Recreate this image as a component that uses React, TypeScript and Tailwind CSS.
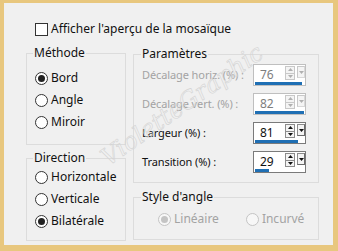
import React from "react";

const font = "font-['Noto_Sans','Open_Sans',sans-serif]";

function Radio({ checked, disabled }: { checked?: boolean; disabled?: boolean }) {
  return (
    <span
      className={`flex items-center justify-center w-[13px] h-[13px] rounded-full border shrink-0 ${
        disabled ? "border-[#c4c4c4] bg-[#f7f7f7]" : "border-[#333333] bg-white"
      }`}
    >
      {checked && (
        <span className={`w-[7px] h-[7px] rounded-full ${disabled ? "bg-[#c4c4c4]" : "bg-[#222222]"}`} />
      )}
    </span>
  );
}

function RadioRow({ label, checked, disabled }: { label: string; checked?: boolean; disabled?: boolean }) {
  return (
    <div className="flex items-center h-[22px] gap-[3px]">
      <Radio checked={checked} disabled={disabled} />
      <span className={disabled ? "text-[#a3a3a3]" : "text-[#111111]"}>{label}</span>
    </div>
  );
}

function Spin({ value, bar, disabled }: { value: string; bar: number; disabled?: boolean }) {
  const line = disabled ? "border-[#c8c8c8]" : "border-[#8c8c8c]";
  const arrow = disabled ? "#b0b0b0" : "#111111";
  return (
    <div
      className={`flex flex-col w-[53px] h-[22px] border bg-white shrink-0 ${
        disabled ? "border-[#bfbfbf]" : "border-[#7a7a7a]"
      }`}
    >
      <div className="flex items-start h-[17px] pt-[1px]">
        <span className={`w-[31px] pl-[6px] leading-[18px] ${disabled ? "text-[#7e7e7e]" : "text-[#111111]"}`}>
          {value}
        </span>
        <div className={`flex flex-col w-[10px] h-[14px] border ${line} bg-[#f4f4f4]`}>
          <div className={`flex-1 flex items-center justify-center border-b ${line}`}>
            <svg width="5" height="3" viewBox="0 0 5 3">
              <path d="M0 3 L2.5 0 L5 3 Z" fill={arrow} />
            </svg>
          </div>
          <div className="flex-1 flex items-center justify-center">
            <svg width="5" height="3" viewBox="0 0 5 3">
              <path d="M0 0 L2.5 3 L5 0 Z" fill={arrow} />
            </svg>
          </div>
        </div>
        <div
          className={`ml-[2px] flex items-center justify-center w-[8px] h-[12px] border-l border-t ${line} ${
            disabled ? "border-r-[#d8d8d8] border-b-[#d8d8d8]" : "border-r-[#6a6a6a] border-b-[#6a6a6a]"
          } border-r border-b bg-[#f4f4f4]`}
        >
          <svg width="5" height="3" viewBox="0 0 5 3">
            <path d="M0 0 L2.5 3 L5 0 Z" fill={arrow} />
          </svg>
        </div>
      </div>
      <div className="h-[3px] pl-[1px]">
        <div className="h-[3px] bg-[#1f6fb4]" style={{ width: bar }} />
      </div>
    </div>
  );
}

function ParamRow({ label, value, bar, disabled }: { label: string; value: string; bar: number; disabled?: boolean }) {
  return (
    <div className="flex items-center justify-between h-[22px]">
      <span className={`text-[11px] tracking-[-0.1px] whitespace-nowrap ${disabled ? "text-[#a3a3a3]" : "text-[#111111]"}`}>
        {label}
      </span>
      <Spin value={value} bar={bar} disabled={disabled} />
    </div>
  );
}

export default function App() {
  return (
    <div className={`w-[338px] h-[251px] bg-[#e8c77e] pl-[4px] pt-[3px] pr-[5px] pb-[6px] ${font} text-[12px] leading-[16px]`}>
      <div className="relative w-full h-full bg-[#f0f0f0] overflow-hidden">
        <div className="flex items-center h-[16px] mt-[18px] ml-[31px] gap-[3px]">
          <span className="w-[13px] h-[13px] border border-[#333333] bg-white shrink-0" />
          <span className="text-[#111111]">Afficher l'aperçu de la mosaïque</span>
        </div>
        <div className="flex items-start mt-[8px] ml-[22px] gap-[7px]">
          <div className="flex flex-col w-[100px]">
            <fieldset className="h-[100px] border border-[#dcdcdc] m-0 p-0 pl-[8px] pt-[6px]">
              <legend className="ml-[-2px] px-[1px] text-[#111111]">Méthode</legend>
              <RadioRow label="Bord" checked />
              <RadioRow label="Angle" />
              <RadioRow label="Miroir" />
            </fieldset>
            <fieldset className="mt-[5px] h-[91px] border border-[#dcdcdc] m-0 p-0 pl-[8px]">
              <legend className="ml-[-2px] px-[1px] text-[#111111]">Direction</legend>
              <RadioRow label="Horizontale" />
              <RadioRow label="Verticale" />
              <RadioRow label="Bilatérale" checked />
            </fieldset>
          </div>
          <div className="flex flex-col w-[186px] pt-[1px]">
            <fieldset className="h-[137px] border border-[#dcdcdc] m-0 p-0 pl-[8px] pr-[12px] pt-[2px]">
              <legend className="ml-[-1px] px-[1px] text-[#111111]">Paramètres</legend>
              <div className="flex flex-col gap-[7px]">
                <ParamRow label="Décalage horiz. (%) :" value="76" bar={47} disabled />
                <ParamRow label="Décalage vert. (%) :" value="82" bar={49} disabled />
                <ParamRow label="Largeur (%) :" value="81" bar={43} />
                <ParamRow label="Transition (%) :" value="29" bar={14} />
              </div>
            </fieldset>
            <fieldset className="mt-[6px] h-[51px] border border-[#dcdcdc] m-0 p-0 pl-[24px] pt-[3px]">
              <legend className="ml-[-17px] px-[1px] text-[#111111]">Style d'angle</legend>
              <div className="flex gap-[27px]">
                <RadioRow label="Linéaire" checked disabled />
                <RadioRow label="Incurvé" disabled />
              </div>
            </fieldset>
          </div>
        </div>
        <div className="absolute left-[178px] top-[102px] -translate-x-1/2 -translate-y-1/2 -rotate-[35deg] text-[24px] leading-[28px] text-transparent [-webkit-text-stroke:0.6px_#d4d4d4] font-['DejaVu_Serif',serif] italic pointer-events-none whitespace-nowrap">
          VioletteGraphic
        </div>
      </div>
    </div>
  );
}
